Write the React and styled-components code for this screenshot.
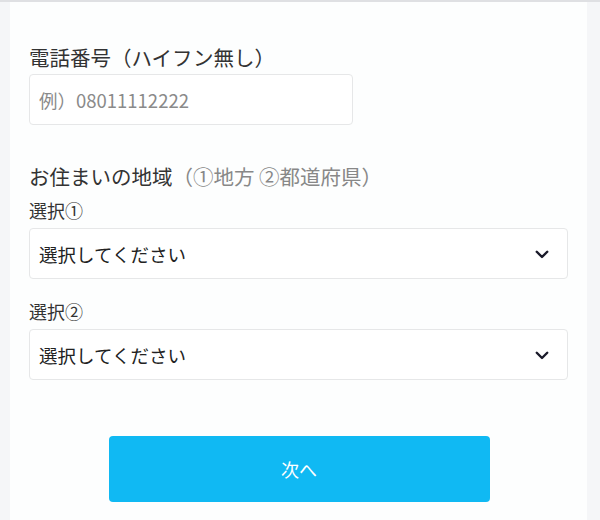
import styled, { createGlobalStyle } from "styled-components";

const Global = createGlobalStyle`
  html, body {
    margin: 0;
    background: #f5f6f8;
    font-family: "Noto Sans CJK JP", "Noto Sans", sans-serif;
    color: #333;
  }
`;

const Page = styled.div`
  border-top: 2px solid #dfe0e3;
  padding: 0 13px 0 10px;
  min-height: 518px;
`;

const Panel = styled.form`
  background: #fdfefe;
  padding: 41px 19px 20px;
  min-height: 457px;
`;

const Field = styled.div`
  margin-bottom: ${(p) => p.$gap || 0}px;
`;

const Label = styled.div`
  font-size: 20.5px;
  line-height: 28px;
  color: #333;
  margin-bottom: ${(p) => p.$space || 3}px;
`;

const Note = styled.span`
  color: #888;
`;

const SubLabel = styled.div`
  font-size: 18px;
  line-height: 26px;
  color: #333;
  margin: 2px 0 5px;
`;

const Input = styled.input`
  box-sizing: border-box;
  display: block;
  width: 324px;
  height: 51px;
  border: 1px solid #e6e7e8;
  border-radius: 4px;
  background: #fff;
  padding: 0 9px;
  font: inherit;
  font-size: 18.5px;
  color: #333;
  &::placeholder {
    color: #8a8a8a;
  }
`;

const SelectBox = styled.div`
  box-sizing: border-box;
  display: flex;
  align-items: center;
  justify-content: space-between;
  height: 51px;
  border: 1px solid #e6e7e8;
  border-radius: 4px;
  background: #fff;
  padding: 0 16px 0 9px;
  font-size: 18.5px;
  color: #222;
`;

const ButtonRow = styled.div`
  display: flex;
  justify-content: center;
  margin-top: 56px;
`;

const NextButton = styled.button`
  width: 381px;
  height: 66px;
  border: none;
  border-radius: 4px;
  background: #10b9f3;
  color: #fff;
  font: inherit;
  font-size: 18px;
  margin-left: 1px;
`;

const Chevron = () => (
  <svg width="18" height="18" viewBox="0 0 24 24" fill="none" stroke="#1a1a2a" strokeWidth="3.2" strokeLinecap="round" strokeLinejoin="round">
    <path d="M5 9l7 7 7-7" />
  </svg>
);

function Select({ label }) {
  return (
    <>
      <SubLabel>{label}</SubLabel>
      <SelectBox>
        <span>選択してください</span>
        <Chevron />
      </SelectBox>
    </>
  );
}

export default function App() {
  return (
    <>
      <Global />
      <Page>
        <Panel onSubmit={(e) => e.preventDefault()}>
          <Field $gap={37}>
            <Label>電話番号（ハイフン無し）</Label>
            <Input placeholder="例）08011112222" />
          </Field>
          <Field $gap={19}>
            <Label $space={7}>
              お住まいの地域<Note>（①地方 ②都道府県）</Note>
            </Label>
            <Select label="選択①" />
          </Field>
          <Field>
            <Select label="選択②" />
          </Field>
          <ButtonRow>
            <NextButton type="submit">次へ</NextButton>
          </ButtonRow>
        </Panel>
      </Page>
    </>
  );
}
